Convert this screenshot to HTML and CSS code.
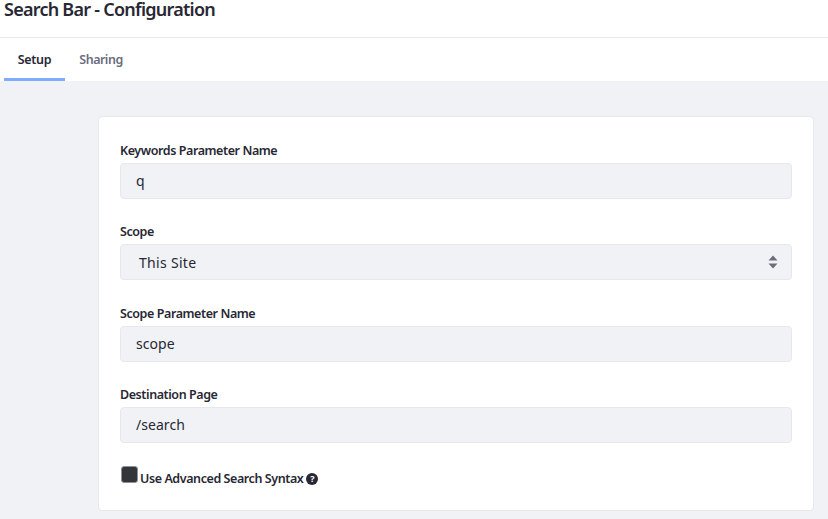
FILE: index.html
```html
<!DOCTYPE html>
<html lang="en">
<head>
    <meta charset="UTF-8">
    <meta name="viewport" content="width=device-width, initial-scale=1.0">
    <title>Search Bar - Configuration</title>
    <link rel="stylesheet" href="styles.css">
</head>
<body>

    <!-- Title -->
    <div class="page-header">
        <h1>Search Bar - Configuration</h1>
    </div>

    <!-- Tabs -->
    <div class="tabs">
        <div class="tab active">Setup</div>
        <div class="tab">Sharing</div>
    </div>

    <!-- Form -->
    <div class="content">
        <div class="card">
            <div class="field">
                <label>Keywords Parameter Name</label>
                <div class="input">q</div>
            </div>
            <div class="field">
                <label>Scope</label>
                <div class="input select">
                    <span>This Site</span>
                    <svg class="select-arrows" width="10" height="14" viewBox="0 0 10 14">
                        <path d="M5 0.5 L9.5 5.5 H0.5 Z M0.5 8.5 H9.5 L5 13.5 Z" fill="#6b6c7e"/>
                    </svg>
                </div>
            </div>
            <div class="field">
                <label>Scope Parameter Name</label>
                <div class="input">scope</div>
            </div>
            <div class="field">
                <label>Destination Page</label>
                <div class="input">/search</div>
            </div>
            <div class="checkbox-row">
                <span class="checkbox"></span>
                <span class="checkbox-label">Use Advanced Search Syntax</span>
                <span class="help-icon">?</span>
            </div>
        </div>
    </div>

</body>
</html>
```

FILE: styles.css
```css
* {
    box-sizing: border-box;
}

html, body {
    margin: 0;
    height: 519px;
    overflow: hidden;
}

body {
    font-family: "Noto Sans", sans-serif;
    color: #272833;
    background-color: #f1f2f5;
}

/* Title bar */
.page-header {
    height: 38px;
    padding-left: 4px;
    background-color: #fff;
    border-bottom: 1px solid #e7e7ed;
}

h1 {
    margin: 0;
    font-size: 18px;
    line-height: 18px;
    font-weight: 600;
    letter-spacing: -0.75px;
}

/* Tabs */
.tabs {
    display: flex;
    height: 43px;
    padding-left: 4px;
    background-color: #fff;
}

.tab {
    width: 61px;
    padding-top: 13px;
    font-size: 12.5px;
    line-height: 18px;
    font-weight: 600;
    letter-spacing: -0.3px;
    text-align: center;
    color: #6b6c7e;
    border-bottom: 3px solid transparent;
}

.tab + .tab {
    width: 72px;
    letter-spacing: -0.5px;
}

.tab.active {
    color: #272833;
    border-bottom-color: #80acff;
}

/* Form card */
.content {
    padding: 35px 14px 0 98px;
}

.card {
    height: 395px;
    padding: 25px 21px 0;
    background-color: #fff;
    border: 1px solid #e7e7ed;
    border-radius: 4px;
}

.field {
    margin-bottom: 24px;
}

.field:nth-child(2) {
    margin-bottom: 25px;
}

label {
    display: block;
    height: 21px;
    font-size: 12.5px;
    line-height: 18px;
    font-weight: 600;
    letter-spacing: -0.42px;
}

.input {
    display: flex;
    align-items: center;
    justify-content: space-between;
    height: 36px;
    padding: 0 15px 1px;
    font-size: 14px;
    letter-spacing: 0.05px;
    background-color: #f1f2f5;
    border: 1px solid #e7e7ed;
    border-radius: 4px;
}

.select {
    padding: 0 13px 0 18px;
    letter-spacing: 0.3px;
}

/* Checkbox row */
.checkbox-row {
    display: flex;
    align-items: flex-start;
    padding-top: 3px;
}

.checkbox {
    width: 17px;
    height: 17px;
    margin: -4px 2px 0 1px;
    background-color: #32363b;
    border: 1px solid #8f9199;
    border-radius: 3px;
}

.checkbox-label {
    font-size: 12.5px;
    line-height: 18px;
    font-weight: 600;
    letter-spacing: -0.42px;
}

.help-icon {
    width: 12px;
    height: 12px;
    margin: 3px 0 0 3px;
    font-size: 9px;
    line-height: 12px;
    font-weight: 700;
    text-align: center;
    color: #fff;
    background-color: #272833;
    border-radius: 50%;
}
```
